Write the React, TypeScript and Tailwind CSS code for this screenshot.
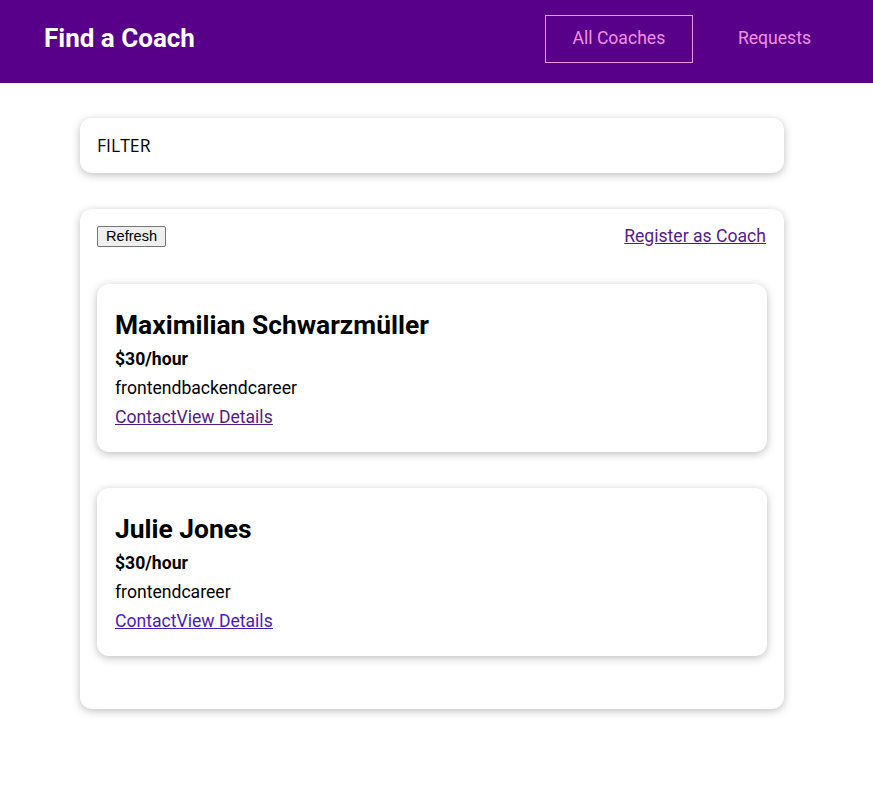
import React from 'react';

type Coach = {
  id: string;
  name: string;
  rate: number;
  areas: string[];
  linkColor: string;
};

const coaches: Coach[] = [
  {
    id: 'c1',
    name: 'Maximilian Schwarzmüller',
    rate: 30,
    areas: ['frontend', 'backend', 'career'],
    linkColor: 'text-[#551a8b]'
  },
  {
    id: 'c2',
    name: 'Julie Jones',
    rate: 30,
    areas: ['frontend', 'career'],
    linkColor: 'text-[#4a1bbd]'
  }
];

const CoachItem: React.FC<{ coach: Coach }> = ({ coach }) => (
  <li className="rounded-xl bg-white px-[18px] pt-[25px] pb-[21px] shadow-[0_2px_8px_rgba(0,0,0,0.26)]">
    <h3 className="text-[26.4px] font-bold leading-[32px] text-black">{coach.name}</h3>
    <h4 className="mt-[4px] text-[17.6px] font-bold leading-[28px] text-black">${coach.rate}/hour</h4>
    <div className="mt-[1px] text-[17.6px] leading-[28px] text-black">
      {coach.areas.map((area) => (
        <span key={area}>{area}</span>
      ))}
    </div>
    <div className={`mt-[1px] text-[17.6px] leading-[28px] underline ${coach.linkColor}`}>
      <a href="#">Contact</a>
      <a href="#">View Details</a>
    </div>
  </li>
);

export default function App() {
  return (
    <div className="min-h-[801px] bg-white font-['Roboto',sans-serif]">
      <header className="flex h-[83px] items-center justify-between bg-[#58008a] pb-[6px] pl-[44px] pr-[33px]">
        <h1 className="text-[26px] font-bold text-white">Find a Coach</h1>
        <nav className="flex items-center gap-[16px]">
          <a
            href="#"
            className="flex h-[48px] w-[148px] items-center justify-center border border-[#f391e3] text-[17.6px] text-[#f391e3]"
          >
            All Coaches
          </a>
          <a
            href="#"
            className="flex h-[48px] items-center justify-center border border-transparent px-[28px] text-[17.6px] text-[#f391e3]"
          >
            Requests
          </a>
        </nav>
      </header>

      <section className="ml-[80px] mt-[35px] w-[704px] rounded-xl bg-white px-[17px] py-[16px] shadow-[0_2px_8px_rgba(0,0,0,0.26)]">
        <p className="font-['Open_Sans',sans-serif] text-[17.6px] leading-[23px] text-black">FILTER</p>
      </section>

      <section className="ml-[80px] mt-[36px] w-[704px] rounded-xl bg-white pl-[17px] pr-[18px] pt-[17px] pb-[53px] shadow-[0_2px_8px_rgba(0,0,0,0.26)]">
        <div className="flex h-[21px] items-center justify-between">
          <button className="h-[21px] rounded-[2px] border border-[#767676] bg-[#efefef] px-[8px] font-['Liberation_Sans',sans-serif] text-[14.6px] leading-[17px] text-black">
            Refresh
          </button>
          <a href="#" className="-mt-[1px] text-[17.6px] leading-[24px] text-[#551a8b] underline">
            Register as Coach
          </a>
        </div>
        <ul className="mr-[-1px] mt-[37px] flex flex-col gap-[36px]">
          {coaches.map((coach) => (
            <CoachItem key={coach.id} coach={coach} />
          ))}
        </ul>
      </section>
    </div>
  );
}
